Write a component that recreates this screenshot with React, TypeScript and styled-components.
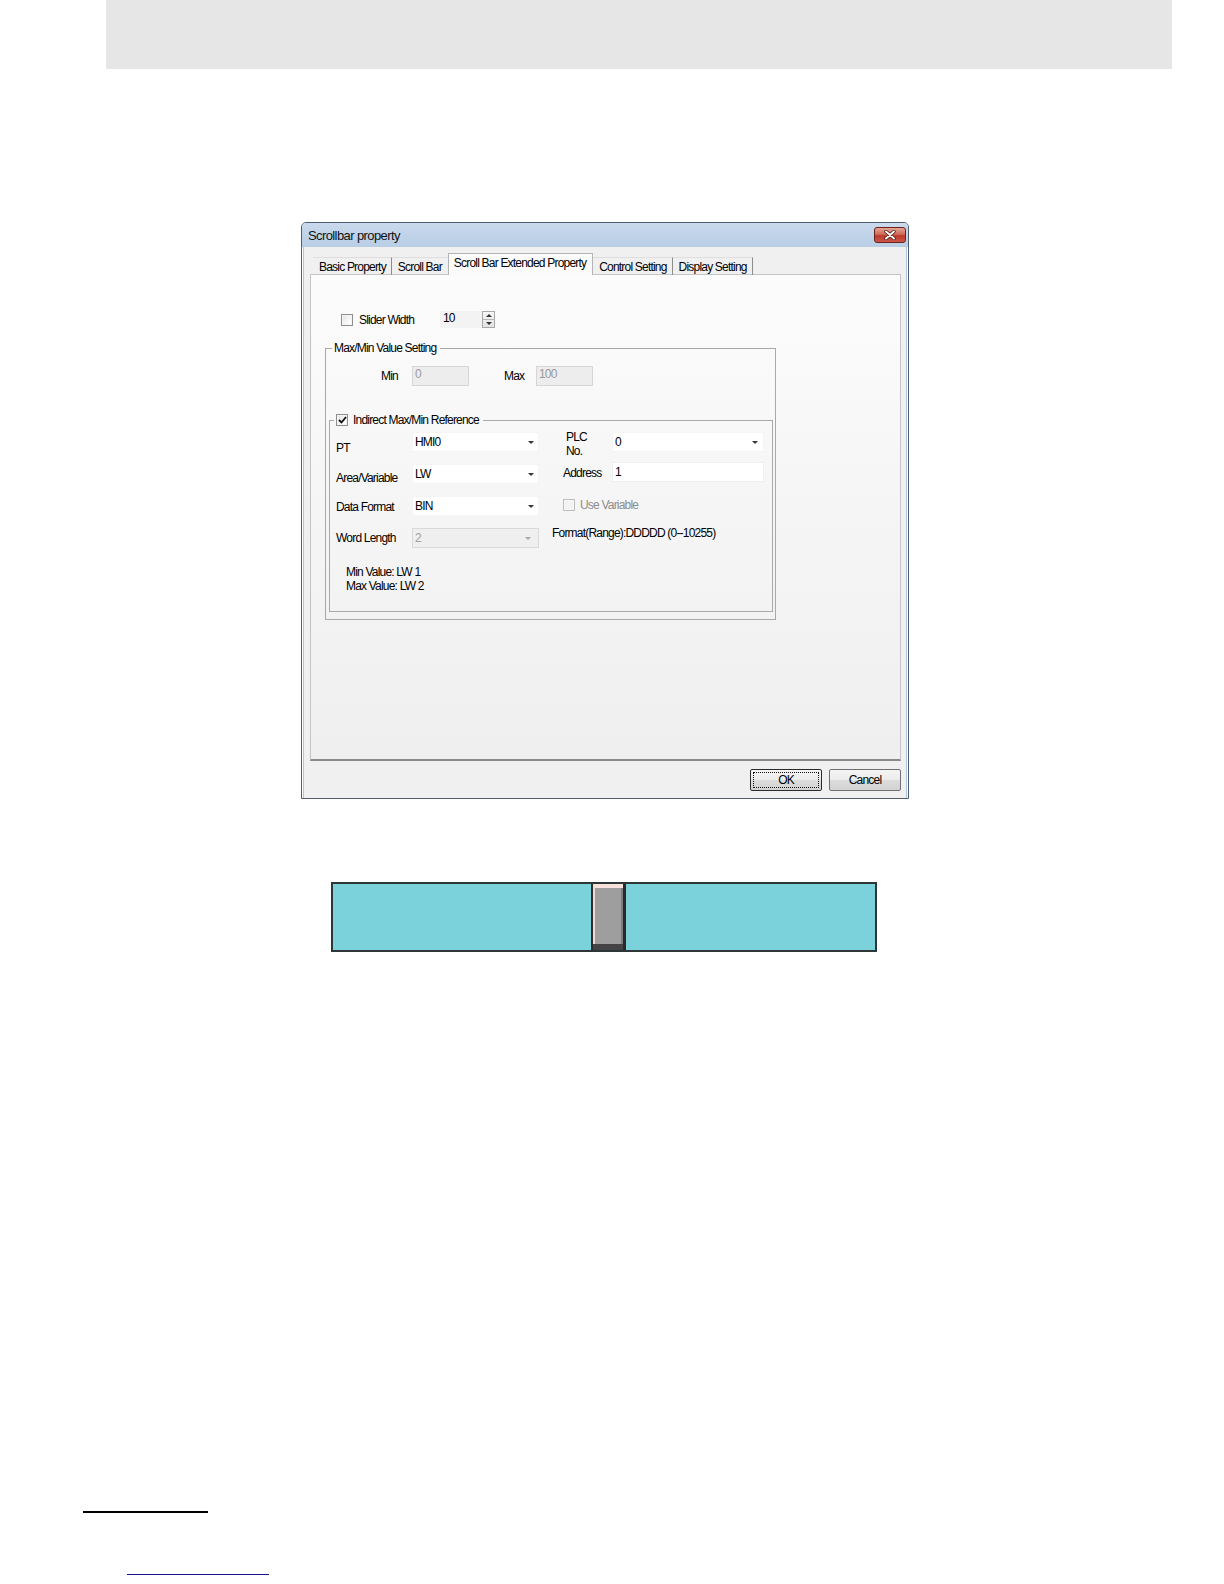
import React from "react";
import styled, { createGlobalStyle } from "styled-components";

const GlobalStyle = createGlobalStyle`
  html, body { margin: 0; padding: 0; background: #ffffff; }
  body { font-family: "Liberation Sans", Arial, sans-serif; }
  * { box-sizing: border-box; }
`;

const Page = styled.div`
  width: 1224px;
  height: 1584px;
  overflow: hidden;
  display: flex;
  flex-direction: column;
  align-items: flex-start;
`;

const Header = styled.div`
  flex-shrink: 0;
  margin-left: 106px;
  width: 1066px;
  height: 69px;
  background: #e6e6e6;
`;

const Dialog = styled.div`
  flex-shrink: 0;
  margin: 153px 0 0 301px;
  width: 608px;
  border: 1px solid #4f5f70;
  border-radius: 5px 5px 0 0;
  background: #f0f0f0;
  color: #000;
  font-size: 12px;
  letter-spacing: -0.8px;
  overflow: hidden;
`;

const TitleBar = styled.div`
  height: 24px;
  display: flex;
  align-items: flex-start;
  justify-content: space-between;
  padding: 0 2px 0 6px;
  background: linear-gradient(180deg, #cbdaed 0%, #bfd2e8 55%, #b9cde5 100%);
`;

const TitleText = styled.span`
  font-size: 13px;
  letter-spacing: -0.6px;
  line-height: 14px;
  margin-top: 6px;
  color: #111;
`;

const CloseButton = styled.div`
  margin-top: 4px;
  width: 32px;
  height: 16px;
  border: 1px solid #6d2219;
  border-radius: 3px;
  background: linear-gradient(180deg, #e3a596 0%, #cf6a5b 45%, #bd3b2b 55%, #c9554a 100%);
  display: flex;
  align-items: center;
  justify-content: center;
`;

const Body = styled.div`
  padding: 7px 7px 7px 8px;
  box-shadow: inset 1px 0 0 #ffffff, inset 2px 0 0 #b3c7dc, inset -1px 0 0 #ffffff,
    inset -2px 0 0 #b3c7dc;
`;

const TabStrip = styled.div`
  position: relative;
  z-index: 1;
  height: 21px;
  margin-bottom: -1px;
  padding-left: 3px;
  display: flex;
  align-items: flex-end;
`;

const Tab = styled.div<{ $active?: boolean; $sep?: boolean }>`
  display: flex;
  align-items: center;
  white-space: nowrap;
  ${(p) =>
    p.$active
      ? `
    height: 22px;
    padding: 0 6px 3px 5px;
    background: #fbfbfb;
    border: 1px solid #b4b4b4;
    border-bottom: none;
  `
      : `
    height: 18px;
    padding: 0 5px 0 6px;
    border-top: 1px solid #dedede;
    border-right: 1px solid ${p.$sep === false ? "transparent" : "#8c8c8c"};
  `}
`;

const Panel = styled.div`
  height: 487px;
  border: 1px solid #c4c4c4;
  border-bottom: 2px solid #898989;
  background: linear-gradient(180deg, #fcfcfc 0%, #f5f5f5 50%, #efefef 100%);
  padding: 36px 0 0 14px;
  display: flex;
  flex-direction: column;
  align-items: flex-start;
`;

const SliderRow = styled.div`
  height: 17px;
  margin-left: 16px;
  display: flex;
  align-items: center;
`;

const Check = styled.span<{ $disabled?: boolean }>`
  flex-shrink: 0;
  width: 12px;
  height: 12px;
  border: 1px solid ${(p) => (p.$disabled ? "#bdbdbd" : "#8e8f8f")};
  background: ${(p) =>
    p.$disabled ? "#f3f3f3" : "linear-gradient(135deg, #e2e2e2 0%, #ffffff 80%)"};
  box-shadow: inset 0 0 0 1px ${(p) => (p.$disabled ? "#f7f7f7" : "#f4f4f4")};
  display: flex;
  align-items: center;
  justify-content: center;
`;

const Label = styled.span<{ $w?: number; $gray?: boolean; $ml?: number; $dy?: number }>`
  flex-shrink: 0;
  white-space: nowrap;
  line-height: 14px;
  ${(p) => (p.$w ? `width: ${p.$w}px;` : "")}
  ${(p) => (p.$ml ? `margin-left: ${p.$ml}px;` : "")}
  ${(p) => (p.$dy ? `padding-top: ${p.$dy * 2}px;` : "")}
  color: ${(p) => (p.$gray ? "#8d8d8d" : "#000")};
`;

const SpinInput = styled.div`
  width: 42px;
  height: 17px;
  background: #f3f3f3;
  padding-left: 3px;
  line-height: 15px;
`;

const SpinButtons = styled.div`
  width: 13px;
  height: 17px;
  border: 1px solid #a9a9a9;
  background: linear-gradient(180deg, #f6f6f6, #e4e4e4);
  display: flex;
  flex-direction: column;
`;

const SpinHalf = styled.div<{ $down?: boolean }>`
  flex: 1;
  display: flex;
  align-items: center;
  justify-content: center;
  ${(p) => (p.$down ? "border-top: 1px solid #b5b5b5;" : "")}
`;

const Tri = styled.span<{ $up?: boolean; $color?: string }>`
  width: 0;
  height: 0;
  border-left: 3px solid transparent;
  border-right: 3px solid transparent;
  ${(p) =>
    p.$up
      ? `border-bottom: 3px solid ${p.$color || "#333"};`
      : `border-top: 3px solid ${p.$color || "#333"};`}
`;

const Group = styled.fieldset<{ $w?: number; $pad: string; $mt: number }>`
  margin: ${(p) => p.$mt}px 0 0 0;
  ${(p) => (p.$w ? `width: ${p.$w}px;` : "")}
  min-inline-size: 0;
  padding: ${(p) => p.$pad};
  border: 1px solid #a9a9a9;
  display: flex;
  flex-direction: column;
  align-items: flex-start;
`;

const Legend = styled.legend<{ $ml: number }>`
  margin-left: ${(p) => p.$ml}px;
  padding: 0 4px 0 2px;
  line-height: 14px;
  height: 14px;
  display: flex;
  align-items: center;
  gap: 5px;
  white-space: nowrap;
`;

const Row = styled.div<{ $mt?: number; $pl?: number; $h?: number; $align?: string }>`
  display: flex;
  align-items: ${(p) => p.$align || "center"};
  height: ${(p) => p.$h || 20}px;
  ${(p) => (p.$mt ? `margin-top: ${p.$mt}px;` : "")}
  ${(p) => (p.$pl ? `padding-left: ${p.$pl}px;` : "")}
`;

const DisabledBox = styled.div`
  width: 57px;
  height: 20px;
  border: 1px solid #d6d6d6;
  background: #ededed;
  color: #9a9a9a;
  padding-left: 2px;
  line-height: 14px;
`;

const Columns = styled.div`
  display: flex;
  align-items: flex-start;
`;

const LeftCol = styled.div`
  margin-top: 5px;
  display: flex;
  flex-direction: column;
  gap: 12px;
`;

const RightCol = styled.div`
  margin-left: 13px;
  margin-top: 3px;
  display: flex;
  flex-direction: column;
  align-items: flex-start;
`;

const Combo = styled.div<{ $w: number; $disabled?: boolean; $arrowPad: number; $mt?: number }>`
  width: ${(p) => p.$w}px;
  height: 20px;
  ${(p) => (p.$mt ? `margin-top: ${p.$mt}px;` : "")}
  background: ${(p) => (p.$disabled ? "#efefef" : "#ffffff")};
  border: 1px solid ${(p) => (p.$disabled ? "#dadada" : "#f4f4f4")};
  color: ${(p) => (p.$disabled ? "#a0a0a0" : "#000")};
  display: flex;
  align-items: center;
  justify-content: space-between;
  padding: 0 ${(p) => p.$arrowPad}px 0 2px;
`;

const TextBox = styled.div<{ $w: number }>`
  width: ${(p) => p.$w}px;
  height: 20px;
  background: #ffffff;
  border: 1px solid #f0f0f0;
  display: flex;
  align-items: center;
  padding-left: 2px;
`;

const TwoLine = styled.div`
  width: 49px;
  padding-left: 3px;
  line-height: 14px;
`;

const Note = styled.div<{ $ml?: number; $mt?: number }>`
  margin-top: ${(p) => p.$mt || 0}px;
  margin-left: ${(p) => p.$ml || 0}px;
  line-height: 14px;
  white-space: nowrap;
`;

const Buttons = styled.div`
  display: flex;
  justify-content: flex-end;
  gap: 7px;
  padding-top: 8px;
`;

const Button = styled.div<{ $default?: boolean }>`
  width: 72px;
  height: 22px;
  border: 1px solid ${(p) => (p.$default ? "#2b2b2b" : "#707070")};
  border-radius: 2px;
  background: linear-gradient(180deg, #f4f4f4 0%, #ececec 48%, #dcdcdc 52%, #d2d2d2 100%);
  display: flex;
  align-items: center;
  justify-content: center;
  padding: 2px;
`;

const FocusRing = styled.div<{ $show?: boolean }>`
  width: 100%;
  height: 100%;
  border: 1px dotted ${(p) => (p.$show ? "#111" : "transparent")};
  display: flex;
  align-items: center;
  justify-content: center;
  line-height: 14px;
`;

const ScrollWidget = styled.div`
  flex-shrink: 0;
  margin: 83px 0 0 331px;
  width: 546px;
  height: 70px;
  border: 2px solid #2e3737;
  background: #7bd2db;
  display: flex;
`;

const Track = styled.div<{ $w?: number }>`
  ${(p) => (p.$w ? `width: ${p.$w}px;` : "flex: 1;")}
  background: #7bd2db;
`;

const Thumb = styled.div`
  width: 35px;
  border-left: 2px solid #2d2d2d;
  border-right: 3px solid #2a2a2a;
  background: #9e9e9e;
  box-shadow: inset 0 -6px 0 #444444, inset 2px 0 0 #f4d9d1, inset 0 4px 0 #f6e1dc,
    inset -2px 0 0 #7d7d7d;
`;

const BlackRule = styled.div`
  flex-shrink: 0;
  margin: 559px 0 0 83px;
  width: 125px;
  height: 2px;
  background: #000;
`;

const BlueRule = styled.div`
  flex-shrink: 0;
  margin: 61px 0 0 127px;
  width: 142px;
  height: 1px;
  background: #14148a;
`;

const CheckMark = () => (
  <svg width="9" height="8" viewBox="0 0 9 8">
    <path d="M1 4 L3.5 6.5 L8 1" fill="none" stroke="#111" strokeWidth="1.8" />
  </svg>
);

const CloseGlyph = () => (
  <svg width="12" height="10" viewBox="0 0 12 10">
    <path d="M2 1.5 L10 8.5 M10 1.5 L2 8.5" stroke="#4a1510" strokeWidth="3.4" strokeLinecap="round" />
    <path d="M2 1.5 L10 8.5 M10 1.5 L2 8.5" stroke="#ffffff" strokeWidth="1.9" strokeLinecap="round" />
  </svg>
);

export default function App() {
  return (
    <>
      <GlobalStyle />
      <Page>
        <Header />
        <Dialog>
          <TitleBar>
            <TitleText>Scrollbar property</TitleText>
            <CloseButton>
              <CloseGlyph />
            </CloseButton>
          </TitleBar>
          <Body>
            <TabStrip>
              <Tab>Basic Property</Tab>
              <Tab $sep={false}>Scroll Bar</Tab>
              <Tab $active>Scroll Bar Extended Property</Tab>
              <Tab>Control Setting</Tab>
              <Tab>Display Setting</Tab>
            </TabStrip>
            <Panel>
              <SliderRow>
                <Check />
                <Label $w={81} $ml={6}>
                  Slider Width
                </Label>
                <SpinInput>10</SpinInput>
                <SpinButtons>
                  <SpinHalf>
                    <Tri $up />
                  </SpinHalf>
                  <SpinHalf $down>
                    <Tri />
                  </SpinHalf>
                </SpinButtons>
              </SliderRow>

              <Group $w={451} $mt={13} $pad="0 2px 7px 3px">
                <Legend $ml={3}>Max/Min Value Setting</Legend>
                <Row $mt={11} $pl={52}>
                  <Label $w={31}>Min</Label>
                  <DisabledBox>0</DisabledBox>
                  <Label $w={32} $ml={35}>
                    Max
                  </Label>
                  <DisabledBox>100</DisabledBox>
                </Row>

                <Group $w={444} $mt={27} $pad="0 9px 18px 6px">
                  <Legend $ml={-2}>
                    <Check>
                      <CheckMark />
                    </Check>
                    Indirect Max/Min Reference
                  </Legend>
                  <Columns>
                    <LeftCol>
                      <Row>
                        <Label $w={76} $dy={6}>
                          PT
                        </Label>
                        <Combo $w={127} $arrowPad={4}>
                          HMI0
                          <Tri />
                        </Combo>
                      </Row>
                      <Row>
                        <Label $w={76} $dy={4}>
                          Area/Variable
                        </Label>
                        <Combo $w={127} $arrowPad={4}>
                          LW
                          <Tri />
                        </Combo>
                      </Row>
                      <Row>
                        <Label $w={76} $dy={1}>
                          Data Format
                        </Label>
                        <Combo $w={127} $arrowPad={4}>
                          BIN
                          <Tri />
                        </Combo>
                      </Row>
                      <Row>
                        <Label $w={76}>Word Length</Label>
                        <Combo $w={127} $arrowPad={7} $disabled>
                          2
                          <Tri $color="#a8a8a8" />
                        </Combo>
                      </Row>
                    </LeftCol>
                    <RightCol>
                      <Row $h={28} $pl={11} $align="flex-start">
                        <TwoLine>
                          PLC
                          <br />
                          No.
                        </TwoLine>
                        <Combo $w={152} $arrowPad={5} $mt={2}>
                          0
                          <Tri />
                        </Combo>
                      </Row>
                      <Row $mt={4} $pl={11}>
                        <Label $w={49} $dy={1}>
                          Address
                        </Label>
                        <TextBox $w={152}>1</TextBox>
                      </Row>
                      <Row $mt={17} $h={12} $pl={11}>
                        <Check $disabled />
                        <Label $gray $ml={5}>
                          Use Variable
                        </Label>
                      </Row>
                      <Note $mt={15}>Format(Range):DDDDD (0--10255)</Note>
                    </RightCol>
                  </Columns>
                  <Note $mt={17} $ml={10}>
                    Min Value: LW 1
                    <br />
                    Max Value: LW 2
                  </Note>
                </Group>
              </Group>
            </Panel>
            <Buttons>
              <Button $default>
                <FocusRing $show>OK</FocusRing>
              </Button>
              <Button>
                <FocusRing>Cancel</FocusRing>
              </Button>
            </Buttons>
          </Body>
        </Dialog>

        <ScrollWidget>
          <Track $w={258} />
          <Thumb />
          <Track />
        </ScrollWidget>

        <BlackRule />
        <BlueRule />
      </Page>
    </>
  );
}
